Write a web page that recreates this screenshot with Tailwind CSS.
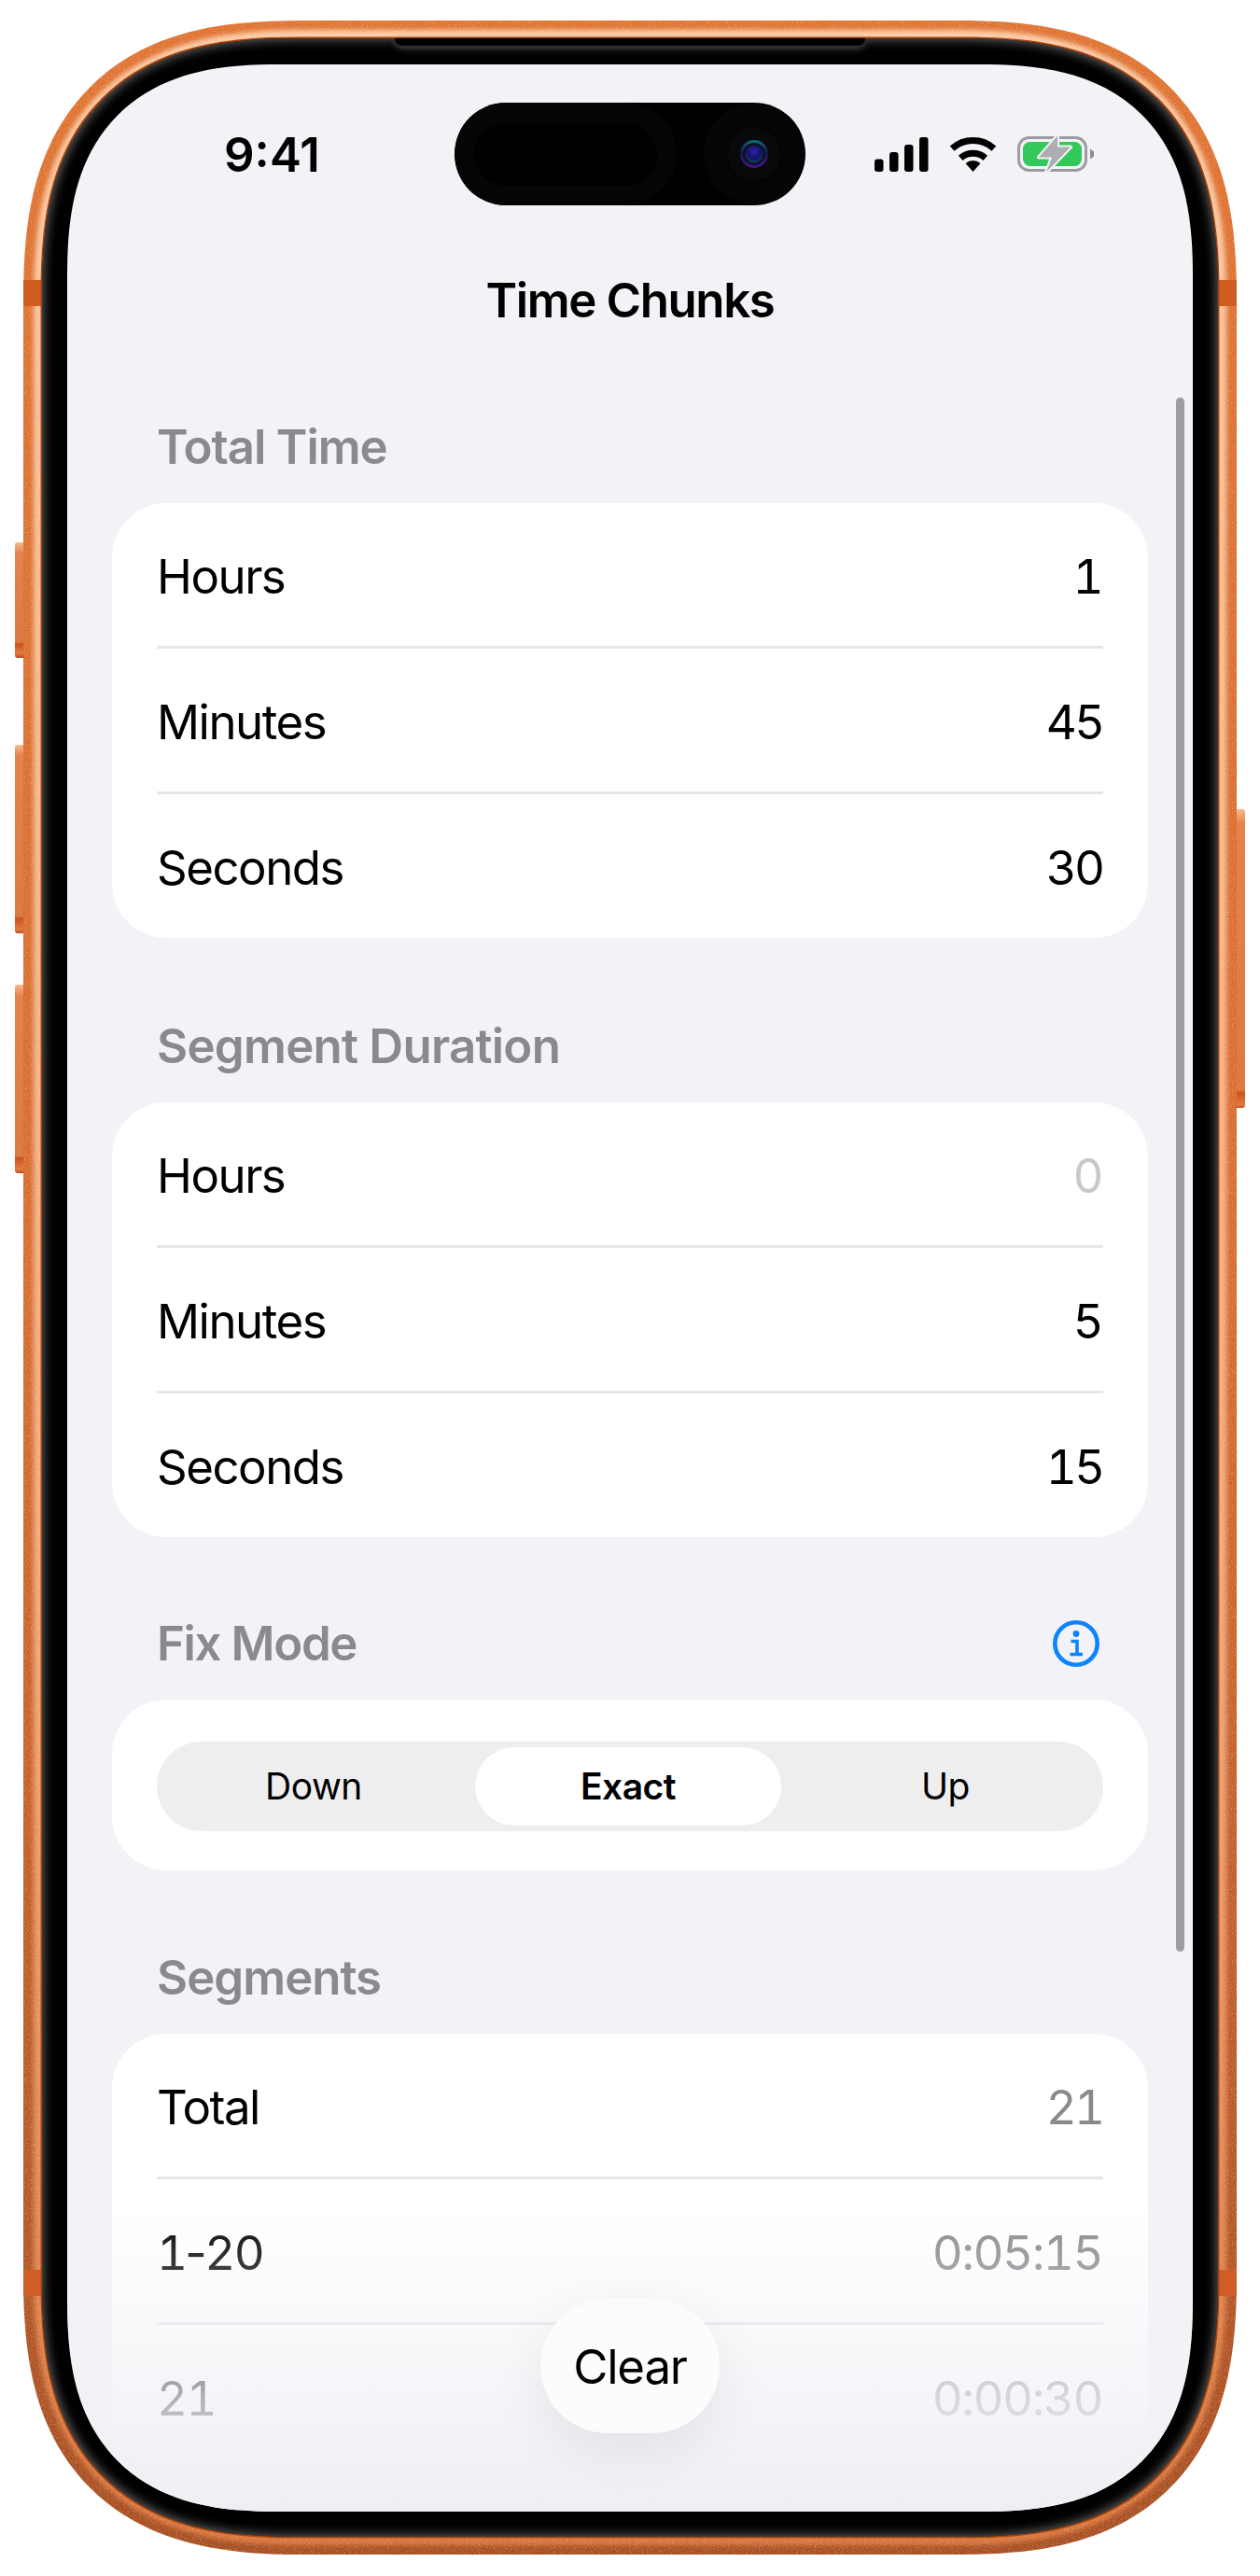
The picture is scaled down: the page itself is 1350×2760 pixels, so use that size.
<!doctype html>
<html lang="en">
<head>
<meta charset="utf-8">
<title>Time Chunks</title>
<script src="https://cdn.jsdelivr.net/npm/@tailwindcss/browser@4"></script>
</head>
<body class="bg-white">
<div class="relative w-[1350px] h-[2760px] bg-white pt-[22px] pl-[25px] overflow-hidden font-['Inter','Liberation_Sans',sans-serif] text-black">

  <!-- side buttons -->
  <div class="absolute left-[16px] top-[581px] w-[11px] h-[124px] rounded-l-[3px] bg-[linear-gradient(180deg,#f7b88f_0%,#e3824a_10%,#dc7a44_86%,#c9541c_88%,#e27a42_96%,#b9491a_100%)]"></div>
  <div class="absolute left-[16px] top-[798px] w-[11px] h-[202px] rounded-l-[3px] bg-[linear-gradient(180deg,#f7b88f_0%,#e3824a_6%,#dc7a44_91%,#c9541c_92%,#e27a42_98%,#b9491a_100%)]"></div>
  <div class="absolute left-[16px] top-[1055px] w-[11px] h-[202px] rounded-l-[3px] bg-[linear-gradient(180deg,#f7b88f_0%,#e3824a_6%,#dc7a44_91%,#c9541c_92%,#e27a42_98%,#b9491a_100%)]"></div>
  <div class="absolute left-[1324px] top-[867px] w-[10px] h-[320px] rounded-r-[3px] bg-[linear-gradient(180deg,#f7b88f_0%,#e3824a_5%,#dc7a44_94%,#c9541c_95%,#e27a42_99%,#b9491a_100%)]"></div>

  <!-- phone frame -->
  <div class="relative w-[1300px] h-[2715px] rounded-[300px] [corner-shape:superellipse(1.35)] bg-[linear-gradient(180deg,#e07433_0%,#d86c30_50%,#a85024_100%)] pt-[19px] px-[20px]">
    <!-- glow ring just outside the bezel -->
    <div class="absolute left-[11px] top-[10px] w-[1278px] h-[2695px] rounded-[292px] [corner-shape:superellipse(1.35)] bg-[linear-gradient(180deg,#fbcba6_0%,#f2ab7e_60%,#d9773f_100%)] blur-[2.5px]"></div>
    <!-- metal grain -->
    <div class="absolute inset-0 rounded-[300px] [corner-shape:superellipse(1.35)] overflow-hidden">
      <svg class="w-[1300px] h-[2715px]" viewBox="0 0 1300 2715">
        <defs>
          <filter id="grain" x="0" y="0" width="100%" height="100%">
            <feTurbulence type="fractalNoise" baseFrequency="0.85" numOctaves="2" seed="4"/>
            <feColorMatrix type="matrix" values="0 0 0 0 1  0 0 0 0 0.85  0 0 0 0 0.72  0 0 0 2 -1"/>
          </filter>
        </defs>
        <rect width="1300" height="2715" filter="url(#grain)" opacity="0.5"/>
      </svg>
    </div>
    <!-- antenna bands -->
    <div class="absolute left-0 top-[278px] w-[20px] h-[28px] bg-[#cf5c20]"></div>
    <div class="absolute right-0 top-[278px] w-[20px] h-[28px] bg-[#cf5c20]"></div>
    <div class="absolute left-0 top-[2410px] w-[20px] h-[28px] bg-[#cf5f26]"></div>
    <div class="absolute right-0 top-[2410px] w-[20px] h-[28px] bg-[#cf5f26]"></div>

    <!-- bezel -->
    <div class="relative w-[1260px] h-[2677px] rounded-[275px] [corner-shape:superellipse(1.35)] bg-black pt-[28px] px-[27px] shadow-[0_0_0_1.5px_#a8440f,inset_0_0_11px_2px_#5c5c5c]">
      <!-- speaker notch -->
      <div class="absolute left-[378px] top-0 w-[504px] h-[8px] bg-black rounded-b-[14px] shadow-[0_3px_7px_#4a4a4a]"></div>

      <!-- screen -->
      <div class="relative w-[1206px] h-[2622px] rounded-[228px] [corner-shape:superellipse(1.35)] bg-[#f2f2f7] overflow-hidden">

        <!-- status bar -->
        <div class="flex items-center h-[110px] mt-[41px]">
          <div class="w-[415px] pl-[168px] text-[51px] leading-none font-semibold">9:41</div>
          <div class="relative w-[376px] h-[110px] rounded-[55px] bg-black overflow-hidden">
            <div class="absolute left-0 top-0 w-[238px] h-[110px] rounded-[55px] bg-[#050505] flex items-center justify-center">
              <div class="w-[196px] h-[67px] rounded-[34px] bg-black"></div>
            </div>
            <svg class="absolute left-[267px] top-0 w-[109px] h-[110px]" viewBox="0 0 109 110">
              <defs>
                <linearGradient id="lens" x1="0" y1="0" x2="0" y2="1">
                  <stop offset="0" stop-color="#0e6f7e"/>
                  <stop offset="0.45" stop-color="#0e1a4c"/>
                  <stop offset="1" stop-color="#4a1590"/>
                </linearGradient>
                <radialGradient id="core" cx="0.5" cy="0.35" r="0.7">
                  <stop offset="0" stop-color="#2d25a5"/>
                  <stop offset="0.55" stop-color="#15126a"/>
                  <stop offset="1" stop-color="#0b4a58"/>
                </radialGradient>
              </defs>
              <circle cx="54" cy="55" r="54" fill="#050505"/>
              <circle cx="54" cy="55" r="31" fill="#040405"/>
              <circle cx="54" cy="55" r="28" fill="#07090b"/>
              <circle cx="54" cy="55" r="15" fill="url(#lens)"/>
              <circle cx="54" cy="55" r="12" fill="#10101f"/>
              <circle cx="54" cy="55" r="9.5" fill="url(#core)"/>
            </svg>
          </div>
          <svg class="ml-[74px] w-[58px] h-[37px]" viewBox="0 0 58 37" fill="#000">
            <rect x="0" y="23.5" width="9.5" height="13.5" rx="3"/>
            <rect x="16" y="16" width="9.5" height="21" rx="3"/>
            <rect x="32" y="8" width="9.5" height="29" rx="3"/>
            <rect x="48" y="0" width="9.5" height="37" rx="3"/>
          </svg>
          <svg class="ml-[22px] w-[51px] h-[37px]" viewBox="0 0 51 37" fill="none" stroke="#000" stroke-width="7">
            <path d="M3.1 12.1A33.5 33.5 0 0 1 47.9 12.1"/>
            <path d="M12.25 22.3A19.8 19.8 0 0 1 38.75 22.3"/>
            <path d="M25.5 37L17.5 28.1A12 12 0 0 1 33.5 28.1Z" fill="#000" stroke="none"/>
          </svg>
          <svg class="ml-[22px] w-[82px] h-[40px]" viewBox="0 0 82 40" fill="none">
            <rect x="1.5" y="2.5" width="72" height="35" rx="11" stroke="#9c9ca0" stroke-width="3"/>
            <rect x="6" y="7" width="63" height="26" rx="7.5" fill="#34c759"/>
            <path d="M78 14.5V25.5L82 22.5V17.5Z" fill="#8e8e92"/>
            <path d="M43 0.5L23 23.5H37L31 39.5L57 12.5H43Z" fill="#aeaeb2" stroke="#f2f2f7" stroke-width="4" stroke-linejoin="round" paint-order="stroke"/>
          </svg>
        </div>

        <!-- title -->
        <div class="h-[199px] pt-[5px] flex items-center justify-center text-[51px] font-semibold tracking-[-1.4px]">Time Chunks</div>

        <!-- Total Time -->
        <div class="px-[48px]">
          <div class="h-[120px] flex items-center pl-[48px] text-[51px] font-semibold text-[#8a8a8e] tracking-[-1.1px]">Total Time</div>
          <div class="rounded-[58px] bg-white pl-[48px] pr-[49px] text-[51px] tracking-[-1.5px]">
            <div class="h-[153px] pt-[5px] flex items-center justify-between"><span>Hours</span><span class="tabular-nums">1</span></div>
            <div class="h-[3px] bg-[#e6e6ea] mr-[-1px]"></div>
            <div class="h-[153px] pt-[5px] flex items-center justify-between"><span>Minutes</span><span class="tabular-nums tracking-[-3px]">45</span></div>
            <div class="h-[3px] bg-[#e6e6ea] mr-[-1px]"></div>
            <div class="h-[154px] pt-[5px] flex items-center justify-between"><span>Seconds</span><span class="tabular-nums tracking-[-3px]">30</span></div>
          </div>

          <!-- Segment Duration -->
          <div class="mt-[56px] h-[120px] flex items-center pl-[48px] text-[51px] font-semibold text-[#8a8a8e] tracking-[-0.75px]">Segment Duration</div>
          <div class="rounded-[58px] bg-white pl-[48px] pr-[49px] text-[51px] tracking-[-1.5px]">
            <div class="h-[153px] pt-[5px] flex items-center justify-between"><span>Hours</span><span class="tabular-nums text-[#c8c8ca]">0</span></div>
            <div class="h-[3px] bg-[#e6e6ea] mr-[-1px]"></div>
            <div class="h-[153px] pt-[5px] flex items-center justify-between"><span>Minutes</span><span class="tabular-nums">5</span></div>
            <div class="h-[3px] bg-[#e6e6ea] mr-[-1px]"></div>
            <div class="h-[154px] pt-[5px] flex items-center justify-between"><span>Seconds</span><span class="tabular-nums tracking-[-3px]">15</span></div>
          </div>

          <!-- Fix Mode -->
          <div class="mt-[54px] h-[120px] flex items-center justify-between pl-[48px] pr-[52px] text-[51px] font-semibold text-[#8a8a8e] tracking-[-1.4px]">
            <span>Fix Mode</span>
            <svg class="w-[50px] h-[50px]" viewBox="0 0 50 50" fill="none" stroke="#0a84ff">
              <circle cx="25" cy="25" r="22.7" stroke-width="4.6"/>
              <circle cx="25" cy="14.5" r="3.4" fill="#0a84ff" stroke="none"/>
              <path d="M19.5 22.5H26V36.5M18.5 36.5H32" stroke-width="3.6"/>
            </svg>
          </div>
          <div class="h-[183px] rounded-[58px] bg-white px-[48px] pt-[45px]">
            <div class="grid grid-cols-3 items-center h-[96px] rounded-[48px] bg-[#eeeeef] text-[39px] tracking-[-0.5px]">
              <div class="text-center pr-[2px]">Down</div>
              <div class="ml-[3px] w-[328px] h-[84px] rounded-[42px] bg-white flex items-center justify-center font-semibold">Exact</div>
              <div class="text-center">Up</div>
            </div>
          </div>

          <!-- Segments -->
          <div class="mt-[55px] h-[120px] flex items-center pl-[48px] text-[51px] font-semibold text-[#8a8a8e] tracking-[-1px]">Segments</div>
          <div class="rounded-[58px] bg-white pl-[48px] pr-[49px] text-[51px] tracking-[-1.5px]">
            <div class="h-[153px] pt-[5px] flex items-center justify-between"><span>Total</span><span class="tabular-nums tracking-[-3px] text-[#8a8a8e]">21</span></div>
            <div class="h-[3px] bg-[#e6e6ea] mr-[-1px]"></div>
            <div class="h-[153px] pt-[5px] flex items-center justify-between"><span class="tabular-nums"><span class="tracking-[-7.5px]">1-</span>20</span><span class="tabular-nums text-[#8a8a8e]">0:05:15</span></div>
            <div class="h-[3px] bg-[#e6e6ea] mr-[-1px]"></div>
            <div class="h-[154px] pt-[5px] flex items-center justify-between"><span class="tabular-nums">21</span><span class="tabular-nums text-[#8a8a8e]">0:00:30</span></div>
          </div>
        </div>

        <!-- scroll indicator -->
        <div class="absolute right-[9px] top-[357px] w-[9px] h-[1665px] rounded-full bg-[#9d9da2]"></div>

        <!-- bottom fade -->
        <div class="absolute left-0 right-0 bottom-0 h-[330px] bg-[linear-gradient(180deg,rgba(242,242,247,0)_0%,rgba(242,242,247,0.72)_62%,rgba(240,240,245,0.98)_88%,#eeeef3_100%)]"></div>

        <!-- clear button -->
        <div class="absolute left-[507px] bottom-[84px] w-[192px] h-[144px] pt-[3px] rounded-[72px] bg-[#fcfcfd] flex items-center justify-center text-[51px] tracking-[-1.2px] shadow-[0_18px_60px_rgba(0,0,0,0.07)]">Clear</div>
      </div>
    </div>
  </div>
</div>
</body>
</html>
